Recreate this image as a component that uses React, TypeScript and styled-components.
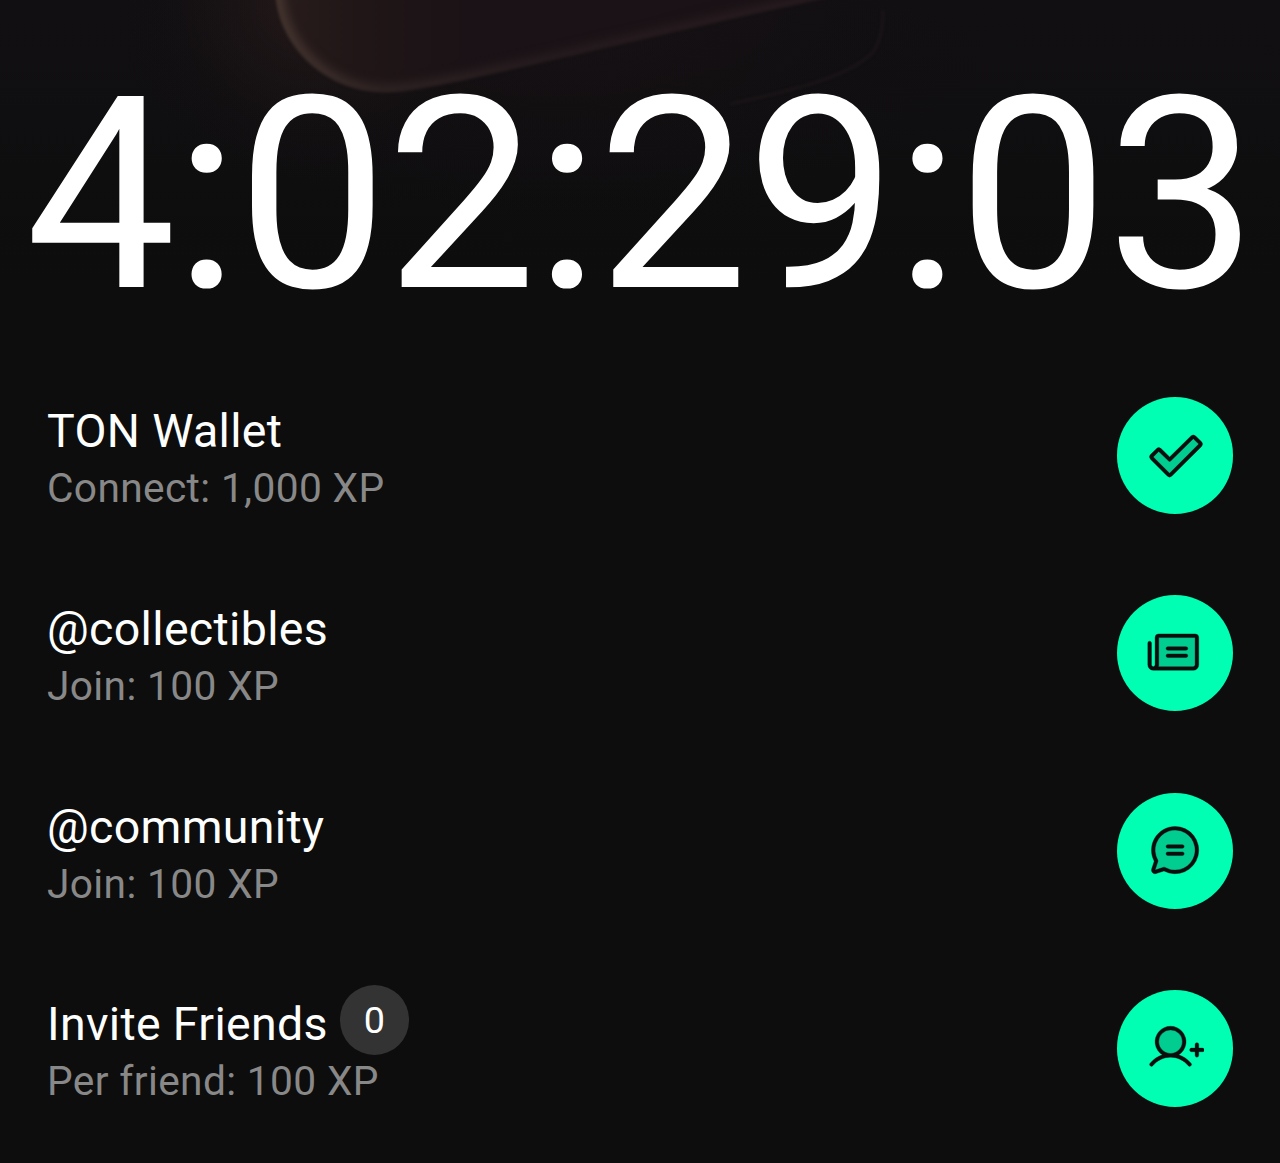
import type { ReactNode } from 'react';
import styled, { createGlobalStyle } from 'styled-components';
import {
  PiChatCircleTextDuotone,
  PiCheckFatDuotone,
  PiNewspaperDuotone,
  PiUserPlusDuotone,
} from 'react-icons/pi';

const GlobalStyle = createGlobalStyle`
  * {
    box-sizing: border-box;
  }

  body {
    margin: 0;
    background: #0d0d0d;
    color: #fff;
    font-family: Roboto, sans-serif;
  }
`;

const Page = styled.main`
  position: relative;
  height: 1163px;
  overflow: hidden;
`;

const Backdrop = styled.svg`
  position: absolute;
  top: 0;
  left: 0;
  width: 1280px;
  height: 300px;
`;

const Timer = styled.h1`
  position: relative;
  margin: 0;
  padding: 38px 0 0 25.3px;
  font-size: 268.6px;
  font-weight: 400;
  line-height: 316px;
  letter-spacing: -2.2px;
  white-space: nowrap;
`;

const TaskList = styled.ul`
  position: relative;
  display: flex;
  flex-direction: column;
  gap: 81.4px;
  margin: 0;
  padding: 43.4px 47px 0;
  list-style: none;
`;

const Task = styled.li`
  display: flex;
  align-items: center;
  justify-content: space-between;
  height: 116.3px;
`;

const Labels = styled.div`
  padding-top: 5.2px;
`;

const Title = styled.div`
  display: flex;
  align-items: center;
  height: 60px;
  font-size: 46.5px;
  letter-spacing: 0.33px;
  white-space: nowrap;
`;

const Subtitle = styled.div`
  height: 54px;
  color: #888;
  font-size: 40.7px;
  line-height: 54px;
  letter-spacing: 0.35px;
  white-space: nowrap;
`;

const Count = styled.span`
  display: flex;
  align-items: center;
  justify-content: center;
  width: 69.6px;
  height: 69.6px;
  margin: -9px 0 0 11.7px;
  border-radius: 50%;
  background: #333;
  font-size: 37.8px;
  letter-spacing: 0;
`;

const ActionButton = styled.button`
  display: flex;
  align-items: center;
  justify-content: center;
  width: 116.3px;
  height: 116.3px;
  padding: 0 0 1.6px;
  border: 0;
  border-radius: 50%;
  background: #00ffb2;
  color: #0d0d0d;
  font-size: 58.2px;

  svg {
    stroke: currentColor;
    stroke-width: 1.5px;
  }
`;

type TaskItem = {
  title: string;
  subtitle: string;
  icon: ReactNode;
  count?: number;
};

const tasks: TaskItem[] = [
  { title: 'TON Wallet', subtitle: 'Connect: 1,000 XP', icon: <PiCheckFatDuotone /> },
  { title: '@collectibles', subtitle: 'Join: 100 XP', icon: <PiNewspaperDuotone /> },
  { title: '@community', subtitle: 'Join: 100 XP', icon: <PiChatCircleTextDuotone /> },
  { title: 'Invite Friends', subtitle: 'Per friend: 100 XP', icon: <PiUserPlusDuotone />, count: 0 },
];

function Glow() {
  return (
    <Backdrop viewBox="0 0 1280 300" aria-hidden="true">
      <defs>
        <linearGradient id="shade" x1="0" y1="0" x2="0" y2="1">
          <stop offset="0" stopColor="#110f12" />
          <stop offset="1" stopColor="#0d0d0d" />
        </linearGradient>
        <radialGradient id="halo" gradientUnits="userSpaceOnUse" cx="310" cy="0" r="190">
          <stop offset="0" stopColor="#33211e" stopOpacity="0.6" />
          <stop offset="0.5" stopColor="#241919" stopOpacity="0.3" />
          <stop offset="1" stopColor="#120f12" stopOpacity="0" />
        </radialGradient>
        <radialGradient
          id="spread"
          gradientUnits="userSpaceOnUse"
          cx="0"
          cy="0"
          r="1"
          gradientTransform="translate(560 0) scale(460 220)"
        >
          <stop offset="0" stopColor="#1b1215" stopOpacity="0.8" />
          <stop offset="1" stopColor="#120f12" stopOpacity="0" />
        </radialGradient>
        <linearGradient id="body" gradientUnits="userSpaceOnUse" x1="275" y1="0" x2="820" y2="0">
          <stop offset="0" stopColor="#291d1c" />
          <stop offset="0.15" stopColor="#201617" />
          <stop offset="0.35" stopColor="#1a1216" />
          <stop offset="1" stopColor="#191115" />
        </linearGradient>
        <linearGradient id="edge" gradientUnits="userSpaceOnUse" x1="275" y1="0" x2="820" y2="0">
          <stop offset="0" stopColor="#45352f" />
          <stop offset="0.2" stopColor="#2e2323" />
          <stop offset="0.5" stopColor="#261c1f" />
          <stop offset="1" stopColor="#271c20" />
        </linearGradient>
        <clipPath id="shape">
          <path d="M275-10C277 48 330 98 397 92C455 86 620 42 840-5V-10Z" />
        </clipPath>
        <filter id="soft" x="-10%" y="-30%" width="120%" height="160%" colorInterpolationFilters="sRGB">
          <feGaussianBlur stdDeviation="5" />
        </filter>
        <filter id="faint" x="-10%" y="-30%" width="120%" height="160%" colorInterpolationFilters="sRGB">
          <feGaussianBlur stdDeviation="1.5" />
        </filter>
      </defs>
      <rect width="1280" height="300" fill="url(#shade)" />
      <rect width="1280" height="300" fill="url(#spread)" />
      <rect width="1280" height="300" fill="url(#halo)" />
      <g filter="url(#faint)">
        <g clipPath="url(#shape)">
          <rect y="-20" width="900" height="130" fill="url(#body)" />
          <path
            d="M275-10C277 48 330 98 397 92C455 86 620 42 840-5"
            fill="none"
            stroke="url(#edge)"
            strokeWidth="16"
            filter="url(#soft)"
          />
        </g>
      </g>
      <path
        d="M730 104C790 91 850 77 873 52C880 42 883 28 883 10"
        fill="none"
        stroke="#1d171a"
        strokeWidth="2"
        filter="url(#faint)"
      />
    </Backdrop>
  );
}

function App() {
  return (
    <Page>
      <GlobalStyle />
      <Glow />
      <Timer>4:02:29:03</Timer>
      <TaskList>
        {tasks.map((task) => (
          <Task key={task.title}>
            <Labels>
              <Title>
                {task.title}
                {task.count !== undefined && <Count>{task.count}</Count>}
              </Title>
              <Subtitle>{task.subtitle}</Subtitle>
            </Labels>
            <ActionButton type="button" aria-label={task.title}>
              {task.icon}
            </ActionButton>
          </Task>
        ))}
      </TaskList>
    </Page>
  );
}

export default App;
